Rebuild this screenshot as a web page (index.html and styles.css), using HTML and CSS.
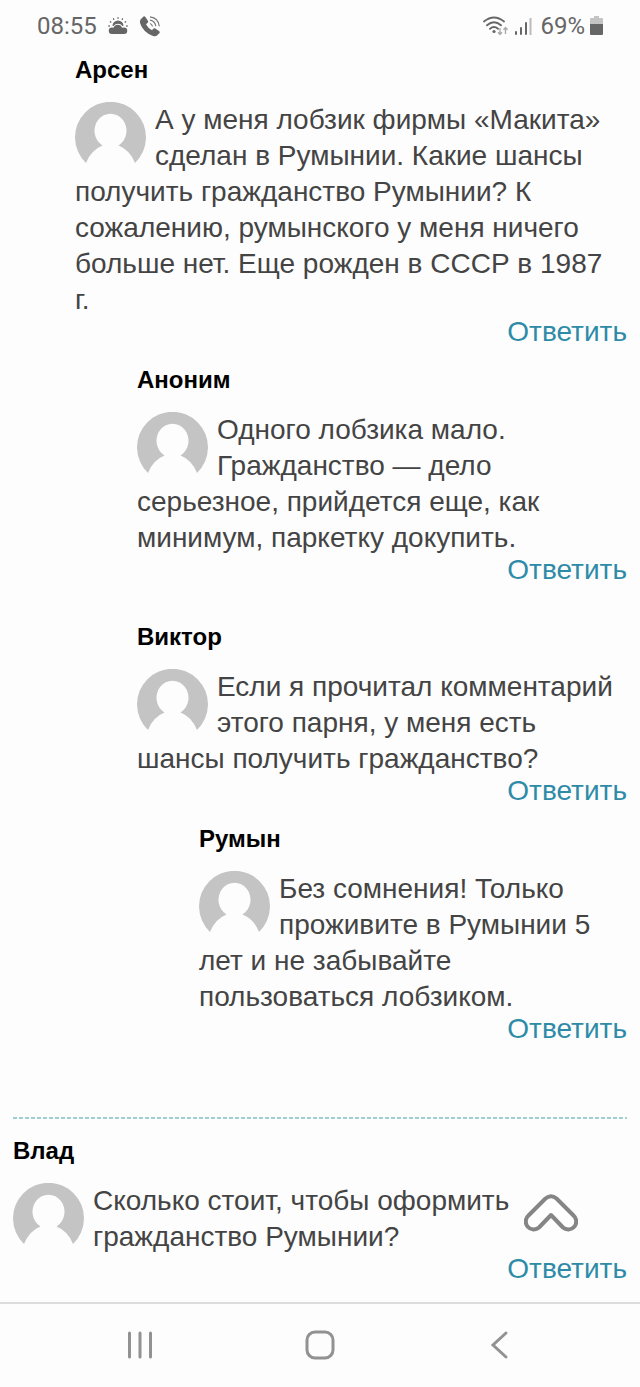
FILE: index.html
```html
<!DOCTYPE html>
<html lang="ru">
<head>
<meta charset="utf-8">
<meta name="viewport" content="width=device-width, initial-scale=1">
<title>Комментарии</title>
<link rel="stylesheet" href="styles.css">
</head>
<body>
<svg class="defs" aria-hidden="true">
  <symbol id="avatar" viewBox="0 0 72 72">
    <path fill="#c4c4c4" fill-rule="evenodd" d="M11 61A35.500 35.500 0 1 1 60 61Q55 48 43.500 43.500A16 17 0 1 0 27.500 43.500Q16 48 11 61Z"/>
  </symbol>
</svg>
<header class="status">
  <div class="status-group">
    <time class="clock">08:55</time>
    <svg class="weather" viewBox="0 0 20 18" width="20" height="18" aria-hidden="true">
      <path fill="#666" d="M4 17a3 3 0 0 1 0-6.500q1 0 1.500.3a4.500 4.500 0 0 1 8.500 0q.8-.3 2-.3a3 3 0 0 1 0 6.500z"/>
      <path fill="#666" d="M4.500 9a5.500 5.500 0 0 1 11 0l-1 .1a5.500 5.500 0 0 0-9 0z"/>
      <path stroke="#666" stroke-width="1.300" stroke-linecap="round" d="M.8 9h.6M2.300 4.800l.5.3M5.500 1.800l.3.5M10 .7v.6M14.500 1.800l-.3.500M17.700 4.800l-.5.3M19.200 9h-.6"/>
    </svg>
    <svg class="call" viewBox="0 0 22 22" width="22" height="22" aria-hidden="true">
      <path fill="#666" d="M1.500 4.500 4.500 1.500q1-.7 1.700.3L9 6q.6 1-.3 1.800L7 9.300q2 4 6 6l1.500-1.700q.8-.8 1.800-.2l4 2.800q.9.7.2 1.700l-2.500 2.700q-1.500 1.300-4.500.2Q4 17 1.200 8.500.5 6 1.500 4.500z"/>
      <path fill="none" stroke="#777" stroke-width="1.200" d="M11 8.500q2 .5 2.500 3M11 5.200q5 .6 5.700 6M11 1.800q8.500 1 9.300 9.500"/>
    </svg>
  </div>
  <div class="status-group status-right">
    <svg viewBox="0 0 26 20" width="26" height="20" aria-hidden="true">
      <g fill="none" stroke="#666" stroke-width="1.800" stroke-linecap="round"><path d="M1 5.500q10-8 20 0M4 9.300q7-6 14 0M7 12.800q4-3.500 8 0"/></g>
      <circle cx="11" cy="15.500" r="1.600" fill="#666"/>
      <path fill="none" stroke="#aaa" stroke-width="1.400" d="M17 12v6.500m-2-2.300 2 2.300 2-2.300M22.500 18v-6.500m-2 2.300 2-2.300 2 2.300"/>
    </svg>
    <svg class="signal" viewBox="0 0 18 20" width="18" height="20" aria-hidden="true">
      <path stroke="#666" stroke-width="2" stroke-linecap="round" d="M2 16v2M7 12v6M12 7v11"/>
      <path stroke="#bbb" stroke-width="2" d="M16.500 2v17"/>
    </svg>
    <span class="charge">69%</span>
    <svg viewBox="0 0 13 20" width="13" height="20" aria-hidden="true">
      <path fill="#c4c4c4" d="M4 0h5v2h3q1 0 1 1v5H0V3q0-1 1-1h3z"/><path fill="#666" d="M0 8h13v10q0 1-1 1H1q-1 0-1-1z"/>
    </svg>
  </div>
</header>
<main class="comments">
  <ol class="thread thread-reply">
    <li class="comment">
      <h2 class="author">Арсен</h2>
      <svg class="avatar" aria-hidden="true"><use href="#avatar"/></svg>
      <p class="text">А у меня лобзик фирмы «Макита» сделан в Румынии. Какие шансы получить гражданство Румынии? К сожалению, румынского у меня ничего больше нет. Еще рожден в СССР в 1987 г.</p>
      <div class="actions"><a class="reply" href="#">Ответить</a></div>
      <ol class="thread thread-reply">
        <li class="comment">
          <h2 class="author">Аноним</h2>
          <svg class="avatar" aria-hidden="true"><use href="#avatar"/></svg>
          <p class="text">Одного лобзика мало. Гражданство — дело серьезное, прийдется еще, как минимум, паркетку докупить.</p>
          <div class="actions"><a class="reply" href="#">Ответить</a></div>
        </li>
        <li class="comment">
          <h2 class="author">Виктор</h2>
          <svg class="avatar" aria-hidden="true"><use href="#avatar"/></svg>
          <p class="text">Если я прочитал комментарий этого парня, у меня есть шансы получить гражданство?</p>
          <div class="actions"><a class="reply" href="#">Ответить</a></div>
          <ol class="thread thread-reply">
            <li class="comment">
              <h2 class="author">Румын</h2>
              <svg class="avatar" aria-hidden="true"><use href="#avatar"/></svg>
              <p class="text">Без сомнения! Только проживите в Румынии 5 лет и не забывайте пользоваться лобзиком.</p>
              <div class="actions"><a class="reply" href="#">Ответить</a></div>
            </li>
          </ol>
        </li>
      </ol>
    </li>
  </ol>
  <svg class="divider" height="2" aria-hidden="true"><line x1="0" y1="1" x2="100%" y2="1"/></svg>
  <ol class="thread">
    <li class="comment">
      <h2 class="author">Влад</h2>
      <svg class="avatar" aria-hidden="true"><use href="#avatar"/></svg>
      <p class="text">Сколько стоит, чтобы оформить гражданство Румынии?</p>
      <div class="actions"><a class="reply" href="#">Ответить</a></div>
    </li>
  </ol>
  <button class="to-top" type="button" aria-label="Наверх">
    <svg viewBox="0 0 54 38" width="54" height="38" aria-hidden="true">
      <path fill="#fff" stroke="#858585" stroke-width="4" stroke-linejoin="round" d="M21.500 4.500Q27 0 32.500 4.500L49.500 21.500A7.500 7.500 0 0 1 39 33.500L27 21 15 33.500A7.500 7.500 0 0 1 4.500 21.500Z"/>
    </svg>
  </button>
</main>
<nav class="navbar" aria-label="Навигация">
  <button class="nav-button" type="button" aria-label="Недавние">
    <svg viewBox="0 0 30 30" width="30" height="30" aria-hidden="true"><path d="M4.500 3v24M15 3v24M25.500 3v24"/></svg>
  </button>
  <button class="nav-button" type="button" aria-label="Домой">
    <svg viewBox="0 0 30 30" width="30" height="30" aria-hidden="true"><rect x="2" y="2" width="26" height="26" rx="8"/></svg>
  </button>
  <button class="nav-button" type="button" aria-label="Назад">
    <svg viewBox="0 0 30 30" width="30" height="30" aria-hidden="true"><path d="M21 3 8 15l13 12"/></svg>
  </button>
</nav>
</body>
</html>
```

FILE: styles.css
```css
* { box-sizing: border-box; }

body {
  display: flex;
  flex-direction: column;
  min-height: 100vh;
  margin: 0;
  background: #fdfdfd;
  color: #444;
  font-family: "Liberation Sans", Arial, sans-serif;
  font-size: 28px;
  line-height: 36px;
}

.defs {
  position: absolute;
  width: 0;
  height: 0;
}

.status {
  display: flex;
  align-items: center;
  justify-content: space-between;
  height: 54px;
  padding: 0 37px;
  padding-bottom: 2px;
  color: #666;
  font-family: Roboto, sans-serif;
  font-size: 24px;
}

.status-group {
  display: flex;
  align-items: center;
  gap: 11px;
}

.status-right { gap: 5px; }

.signal { margin-right: 3px; }

.comments {
  position: relative;
  flex: 1;
  padding: 0 13px 18px;
}

.thread {
  margin: 0;
  padding: 0;
  list-style: none;
}

.thread-reply { padding-left: 62px; }

.comment > .thread { margin-top: 18px; }

.comment + .comment { margin-top: 37px; }

.author {
  margin: 0 0 16px;
  color: #000;
  font-size: 24px;
  line-height: 32px;
}

.avatar {
  float: left;
  width: 72px;
  height: 72px;
  margin-right: 8px;
}

.text {
  margin: 0;
  padding-right: 8px;
}

.actions {
  clear: both;
  line-height: 28px;
  text-align: right;
}

.reply {
  color: #2e8ba8;
  text-decoration: none;
}

.divider {
  display: block;
  width: 100%;
  margin: 74px 0 16px;
}

.divider line {
  stroke: #9fcfce;
  stroke-width: 2;
  stroke-dasharray: 4 2;
}

.to-top {
  position: absolute;
  right: 62px;
  bottom: 70px;
  padding: 0;
  border: 0;
  background: none;
  line-height: 0;
}

.navbar {
  display: grid;
  grid-template-columns: repeat(3, 180px);
  justify-content: center;
  align-items: center;
  height: 85px;
  padding-bottom: 2px;
  border-top: 2px solid #dcdcdc;
}

.nav-button {
  padding: 0;
  border: 0;
  background: none;
  line-height: 0;
}

.nav-button svg {
  fill: none;
  stroke: #929292;
  stroke-width: 3;
  stroke-linecap: round;
}
```
